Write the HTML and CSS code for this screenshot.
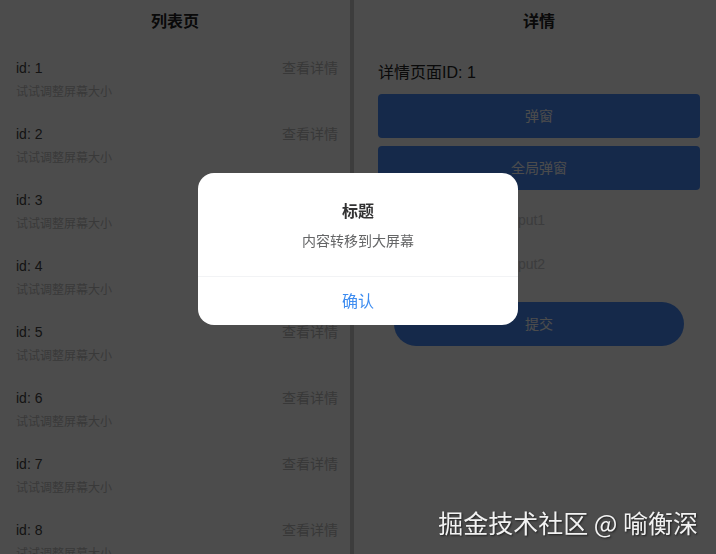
FILE: index.html
```html
<!DOCTYPE html>
<html>
<head>
	<meta charset="UTF-8">
	<title>大屏幕</title>
	<link rel="stylesheet" href="styles.css">
</head>
<body>
	<div class="app">
		<div class="listPane">
			<div class="paneHeader">列表页</div>
			<div class="item"><div class="itemRow"><span class="itemId">id: 1</span><span class="itemLink">查看详情</span></div><div class="itemDesc">试试调整屏幕大小</div></div>
			<div class="item"><div class="itemRow"><span class="itemId">id: 2</span><span class="itemLink">查看详情</span></div><div class="itemDesc">试试调整屏幕大小</div></div>
			<div class="item"><div class="itemRow"><span class="itemId">id: 3</span><span class="itemLink">查看详情</span></div><div class="itemDesc">试试调整屏幕大小</div></div>
			<div class="item"><div class="itemRow"><span class="itemId">id: 4</span><span class="itemLink">查看详情</span></div><div class="itemDesc">试试调整屏幕大小</div></div>
			<div class="item"><div class="itemRow"><span class="itemId">id: 5</span><span class="itemLink">查看详情</span></div><div class="itemDesc">试试调整屏幕大小</div></div>
			<div class="item"><div class="itemRow"><span class="itemId">id: 6</span><span class="itemLink">查看详情</span></div><div class="itemDesc">试试调整屏幕大小</div></div>
			<div class="item"><div class="itemRow"><span class="itemId">id: 7</span><span class="itemLink">查看详情</span></div><div class="itemDesc">试试调整屏幕大小</div></div>
			<div class="item"><div class="itemRow"><span class="itemId">id: 8</span><span class="itemLink">查看详情</span></div><div class="itemDesc">试试调整屏幕大小</div></div>
		</div>
		<div class="detailPane">
			<div class="paneHeader">详情</div>
			<div class="detailId">详情页面ID: 1</div>
			<div class="btn">弹窗</div>
			<div class="btn">全局弹窗</div>
			<div class="field"><span class="fieldLabel">输入框1</span><span class="fieldInput">input1</span></div>
			<div class="field"><span class="fieldLabel">输入框2</span><span class="fieldInput">input2</span></div>
			<div class="submitWrap"><div class="btn round">提交</div></div>
		</div>
	</div>
	<div class="mask"></div>
	<div class="dialog">
		<div class="dialogTitle">标题</div>
		<div class="dialogContent">内容转移到大屏幕</div>
		<div class="dialogFooter">确认</div>
	</div>
	<div class="watermark">掘金技术社区 @ 喻衡深</div>
</body>
</html>
```
FILE: styles.css
```css
body {
	margin: 0;
	padding: 0;
	background-color: #fff;
	font-family: "Liberation Sans", "Noto Sans CJK SC", sans-serif;
	overflow: hidden;
	height: 554px;
}
.app {
	display: flex;
	flex-direction: row;
	height: 100%;
}
.listPane {
	width: 350px;
	border-right: 4px solid #ccc;
	overflow: hidden;
}
.paneHeader {
	height: 44px;
	line-height: 44px;
	text-align: center;
	font-size: 16px;
	font-weight: bold;
	color: #222;
}
.item {
	padding: 12px 12px 8px 16px;
}
.itemRow {
	display: flex;
	justify-content: space-between;
	line-height: 24px;
	font-size: 14px;
}
.itemId {
	color: #444;
}
.itemLink {
	color: #bbb;
}
.itemDesc {
	margin-top: 2px;
	line-height: 20px;
	font-size: 12px;
	color: #c0c0c0;
}
.detailPane {
	flex: 1;
	padding: 0 16px 0 24px;
}
.detailId {
	margin-top: 17px;
	line-height: 24px;
	font-size: 16px;
	color: #222;
	margin-bottom: 9px;
}
.btn {
	height: 44px;
	line-height: 44px;
	border-radius: 4px;
	background-color: #488bf8;
	color: #fff;
	text-align: center;
	font-size: 14px;
	margin-bottom: 8px;
}
.btn.round {
	border-radius: 22px;
	margin: 0;
}
.field {
	display: flex;
	height: 44px;
	line-height: 44px;
	font-size: 14px;
}
.fieldLabel {
	width: 117px;
	margin-right: 12px;
	color: #333;
}
.fieldInput {
	color: #c8c9cc;
}
.submitWrap {
	padding: 16px;
}
.mask {
	position: fixed;
	top: 0;
	left: 0;
	right: 0;
	bottom: 0;
	background-color: rgba(0, 0, 0, 0.7);
}
.dialog {
	position: fixed;
	top: 45%;
	left: 50%;
	transform: translate(-50%, -50%);
	width: 320px;
	border-radius: 16px;
	background-color: #fff;
	overflow: hidden;
	font-family: "Noto Sans CJK SC", sans-serif;
}
.dialogTitle {
	padding-top: 25px;
	line-height: 24px;
	font-size: 16px;
	font-weight: 600;
	text-align: center;
	color: #323233;
}
.dialogContent {
	padding: 8px 24px 26px;
	line-height: 20px;
	font-size: 14px;
	text-align: center;
	color: #646566;
}
.dialogFooter {
	height: 48px;
	line-height: 46px;
	border-top: 1px solid #f2f3f5;
	text-align: center;
	font-size: 16px;
	color: #3d8cf0;
}
.watermark {
	position: fixed;
	right: 18px;
	bottom: 16px;
	font-family: "Noto Sans CJK SC", sans-serif;
	font-size: 25px;
	line-height: 32px;
	color: #f2f2f2;
	text-shadow: 1px 1px 2px rgba(0, 0, 0, 0.6);
}
```
